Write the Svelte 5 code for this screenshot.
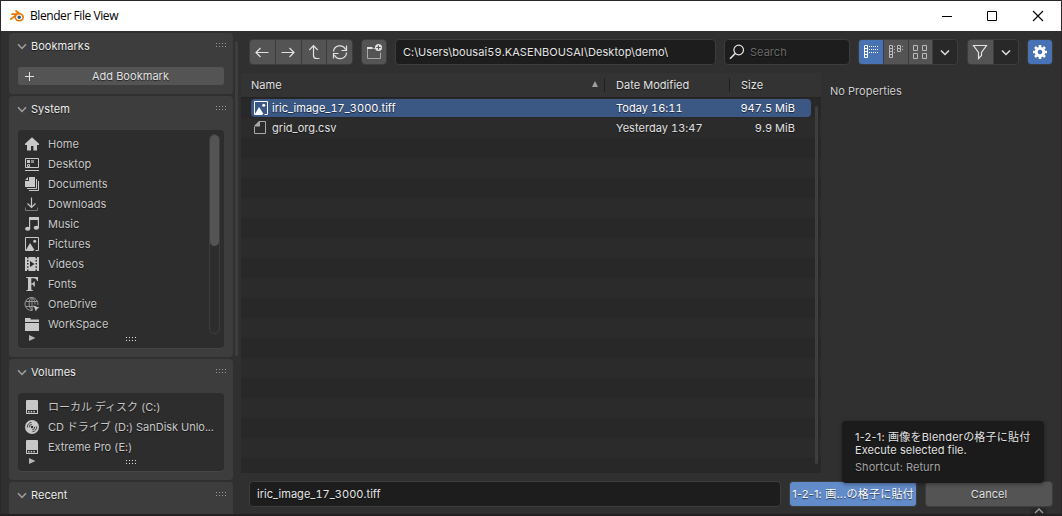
<script>
  const places = [
    { name: 'Home', icon: 'home' },
    { name: 'Desktop', icon: 'desktop' },
    { name: 'Documents', icon: 'documents' },
    { name: 'Downloads', icon: 'downloads' },
    { name: 'Music', icon: 'music' },
    { name: 'Pictures', icon: 'picture' },
    { name: 'Videos', icon: 'video' },
    { name: 'Fonts', icon: 'font' },
    { name: 'OneDrive', icon: 'globe' },
    { name: 'WorkSpace', icon: 'folder' }
  ];

  const volumes = [
    { name: 'ローカル ディスク (C:)', icon: 'drive' },
    { name: 'CD ドライブ (D:) SanDisk Unlo...', icon: 'disc' },
    { name: 'Extreme Pro (E:)', icon: 'drive' }
  ];

  const files = [
    { name: 'iric_image_17_3000.tiff', date: 'Today 16:11', size: '947.5 MiB', icon: 'picture' },
    { name: 'grid_org.csv', date: 'Yesterday 13:47', size: '9.9 MiB', icon: 'file' }
  ];

  let selected = $state(0);
  let filename = $state('iric_image_17_3000.tiff');
  let directory = $state('C:\\Users\\bousai59.KASENBOUSAI\\Desktop\\demo\\');
  let search = $state('');

  function pick(i) {
    selected = i;
    filename = files[i].name;
  }
</script>

{#snippet icon(name)}
  <svg class="icon" viewBox="0 0 16 16" width="16" height="16" fill="none" stroke="currentColor">
    {#if name === 'home'}
      <path d="M8 1.2L1 7.8V9h2v5.6h4V10h2.4v4.6H13V9h2V7.8z" fill="currentColor" stroke="none" />
    {:else if name === 'desktop'}
      <path d="M1.5 2.5h13v9h-13zM1 14.5h14M3.5 8.5h2v2h-2z" />
      <path d="M3 4h3v3H3z" fill="currentColor" stroke="none" />
      <path d="M7 4h3v3H7z" fill="#8b8b8b" stroke="none" />
    {:else if name === 'documents'}
      <path d="M5 1h6v10H1V5h4zM1 4l3-3v3z" fill="currentColor" stroke="none" />
      <path d="M12.5 3v9.5H3M14.5 5v9.5H5" />
    {:else if name === 'downloads'}
      <path d="M7.5 1.5v10M3.5 7.5l4 4 4-4" stroke-width="1.2" />
      <path d="M1.5 11.5v3h12v-3" stroke="#777" />
    {:else if name === 'music'}
      <path d="M5 1h10v11h-1.2V4H6.2v9H5z" fill="currentColor" stroke="none" />
      <ellipse cx="3.7" cy="12.7" rx="2.6" ry="2" fill="currentColor" stroke="none" />
      <ellipse cx="12.3" cy="11.8" rx="2.6" ry="2" fill="currentColor" stroke="none" />
    {:else if name === 'picture'}
      <path d="M9.5 14.5h-8v-13h13v13h-3" />
      <path d="M2 14l4-7 4.5 7z" fill="currentColor" stroke="none" />
      <circle cx="10.7" cy="5.2" r="1.5" fill="currentColor" stroke="none" />
    {:else if name === 'video'}
      <path
        d="M1 1h2v1.5h1.5V1h7v1.5H13V1h2v14h-2v-1.5h-1.5V15h-7v-1.5H3V15H1zM3 4v1.5h1.5V4zM3 7v1.5h1.5V7zM3 10.2v1.5h1.5v-1.5zM11.5 4v1.5H13V4zM11.5 7v1.5H13V7zM11.5 10.2v1.5H13v-1.5zM6 5v6l4.5-3z"
        fill="currentColor" fill-rule="evenodd" stroke="none"
      />
    {:else if name === 'font'}
      <path
        d="M2 1h12v4h-1C12.5 3 11.8 2.2 9.5 2.2H7.3V7.4C9 7.4 9.5 7 9.8 5.5h1v5h-1C9.5 9 9 8.5 7.3 8.5V13c0 1 .4 1.2 1.7 1.3V15H2.2v-.7c1.3-.1 1.8-.3 1.8-1.300V3c0-1-.5-1.200-2-1.300z"
        fill="currentColor" stroke="none"
      />
    {:else if name === 'globe'}
      <g stroke="#999">
        <path d="M13.9 9A6.5 6.5 0 1 0 8 14.5M1.8 5.5h12.4M1.8 10.5H10M8 1.5v13" />
        <path d="M9 14c-5-1-5-11-1-12.5C10.5 2.5 11 6 11 8.5" />
      </g>
      <path d="M9.5 9.5l6 2.2-2.5 1-1 2.8z" fill="currentColor" stroke="none" />
    {:else if name === 'folder'}
      <path d="M1 2h5.5v1.5H15V6H1zM1 7h14v8H1z" fill="currentColor" stroke="none" />
    {:else if name === 'drive'}
      <path
        d="M3 1h10q1 0 1 1v13H2V2q0-1 1-1zM3 11v3h10v-3zM4 12h1.5v1.5H4zM6.7 12h1.5v1.5H6.7zM9.4 12h1.5v1.5H9.4z"
        fill="currentColor" fill-rule="evenodd" stroke="none"
      />
    {:else if name === 'disc'}
      <circle cx="8" cy="8" r="7" fill="currentColor" stroke="none" />
      <circle cx="8" cy="8" r="1.2" fill="#2c2c2c" stroke="none" />
      <g stroke="#2c2c2c" stroke-width="0.9">
        <path d="M3.3 8.5A4.8 4.8 0 0 1 7.5 3.3M5.3 8.3A2.7 2.7 0 0 1 7.7 5.3" />
        <path d="M12.7 7.5a4.8 4.8 0 0 1-4.2 5.2M10.7 7.7a2.7 2.7 0 0 1-2.4 3" />
      </g>
    {:else if name === 'file'}
      <path d="M7 1.5h5.5v12h-11V7" stroke="#a8a8a8" />
      <path d="M1 6.5V6l5-5h1v5.5z" fill="#a8a8a8" stroke="none" />
    {:else if name === 'back'}
      <path d="M14.5 8.5H2M6.5 4L2 8.5 6.5 13" stroke-width="1.2" />
    {:else if name === 'forward'}
      <path d="M1.5 8.5H14M9.5 4L14 8.5 9.5 13" stroke-width="1.2" />
    {:else if name === 'up'}
      <path d="M13.5 14.5h-3q-3 0-3-3V1.5M3.3 6L7.5 1.7 11.7 6" stroke-width="1.2" />
    {:else if name === 'refresh'}
      <path d="M1.5 7.5A6.3 6.3 0 0 1 13.5 5.5M14.5 1.5v5h-5M14.5 8.5A6.3 6.3 0 0 1 2.5 11M1.5 14.5v-5h5" stroke-width="1.2" />
    {:else if name === 'newfolder'}
      <path d="M9 4.5H6.5M1.5 4v10.5h13v-6" stroke="#a8a8a8" />
      <path d="M1 3h5.5v2H1z" fill="currentColor" stroke="none" />
      <circle cx="12.5" cy="3.5" r="3.5" fill="currentColor" stroke="none" />
      <path d="M12.5 1.3v4.4M10.3 3.5h4.4" stroke="#545454" />
    {:else if name === 'search'}
      <circle cx="9.7" cy="6" r="4.8" stroke-width="1.2" />
      <path d="M6.2 9.5L1 14.7" stroke-width="1.6" />
    {:else if name === 'list'}
      <path d="M1.5 1.5h3v12h-3zM1.5 4.5h3M1.5 7.5h3M1.5 10.5h3" />
      <path d="M6 2.5h10M6 5.5h10M6 8.5h10" stroke-dasharray="1 1" />
    {:else if name === 'details'}
      <path d="M1.5 1.5h3v12h-3zM1.5 4.5h3M1.5 7.5h3M1.5 10.5h3M9.5 1.5h3v6h-3zM9.5 4.5h3" />
      <path d="M6 2.5h1M6 5.5h1M6 8.5h1M14 2.5h1M14 5.5h1" />
    {:else if name === 'grid'}
      <path d="M1.5 1.5h4v5h-4zM10.5 1.5h4v5h-4zM1.5 9.5h4v5h-4zM10.5 9.5h4v5h-4z" />
    {:else if name === 'filter'}
      <path d="M1.5 1.5h13L9.5 8.5v3L6.5 14.5v-6z" stroke-width="1.2" />
    {:else if name === 'gear'}
      <circle cx="8" cy="8" r="3.8" stroke-width="3" />
      <path d="M8 1v2M8 13v2M1 8h2M13 8h2M3 3l1.5 1.5M11.5 11.5L13 13M3 13l1.5-1.5M11.5 4.5L13 3" stroke-width="2.6" />
    {:else if name === 'down'}
      <path d="M4 6.5l4 4 4-4" stroke-width="1.5" />
    {:else if name === 'plus'}
      <path d="M8.5 4v9M4 8.5h9" />
    {/if}
  </svg>
{/snippet}

{#snippet grip()}
  <svg class="grip" width="11" height="4" viewBox="0 0 11 4">
    <path d="M0 .5h11M0 3.5h11" stroke="currentColor" stroke-dasharray="1 2" />
  </svg>
{/snippet}

{#snippet panelHead(title)}
  <header class="panel-head">
    <svg class="chevron" width="10" height="7" viewBox="0 0 10 7">
      <path d="M1 1.2l4 4.3 4-4.3" fill="none" stroke="#a0a0a0" stroke-width="1.5" />
    </svg>
    <h2>{title}</h2>
    {@render grip()}
  </header>
{/snippet}

{#snippet listFoot()}
  <div class="list-foot">
    <svg class="expand" width="7" height="6" viewBox="0 0 7 6"><path d="M0 0l6.5 3L0 6z" fill="#b5b5b5" /></svg>
    {@render grip()}
  </div>
{/snippet}

<div class="window">
  <div class="titlebar">
    <svg class="logo" width="16" height="14" viewBox="0 0 16 14">
      <path d="M1.8 10.2L8.5 5M3 5.2h6M7 2l5 3.8" stroke="#ea7600" stroke-width="1.7" stroke-linecap="round" fill="none" />
      <ellipse cx="10.2" cy="8.3" rx="4.7" ry="4.2" fill="#ea7600" />
      <ellipse cx="10.2" cy="8.2" rx="3" ry="2.7" fill="#fff" />
      <circle cx="10.2" cy="8.2" r="1.7" fill="#265787" />
    </svg>
    <span class="title">Blender File View</span>
    <svg class="controls" width="102" height="12" viewBox="0 0 102 12" fill="none" stroke="#000">
      <path d="M0 6.5h10M45.5 1.5h9v9h-9z" />
      <path d="M91 1l10 10M101 1L91 11" stroke-width="1.1" />
    </svg>
  </div>

  <div class="body">
    <aside>
      <div class="panels">
        <section class="panel bookmarks">
          {@render panelHead('Bookmarks')}
          <button class="add">{@render icon('plus')}<span>Add Bookmark</span></button>
        </section>
        <section class="panel system">
          {@render panelHead('System')}
          <div class="list">
            <div class="list-main">
              <ul>
                {#each places as place}
                  <li>{@render icon(place.icon)}<span>{place.name}</span></li>
                {/each}
              </ul>
              <div class="scroll"><div class="thumb"></div></div>
            </div>
            {@render listFoot()}
          </div>
        </section>
        <section class="panel volumes">
          {@render panelHead('Volumes')}
          <div class="list">
            <ul>
              {#each volumes as volume}
                <li>{@render icon(volume.icon)}<span>{volume.name}</span></li>
              {/each}
            </ul>
            {@render listFoot()}
          </div>
        </section>
        <section class="panel recent">
          {@render panelHead('Recent')}
        </section>
      </div>
      <div class="side-scroll"></div>
    </aside>

    <main>
      <div class="toolbar">
        <div class="group nav">
          <button>{@render icon('back')}</button>
          <button>{@render icon('forward')}</button>
          <button>{@render icon('up')}</button>
          <button>{@render icon('refresh')}</button>
        </div>
        <div class="group create"><button>{@render icon('newfolder')}</button></div>
        <input class="field path" bind:value={directory} />
        <label class="field search">
          {@render icon('search')}
          <input placeholder="Search" bind:value={search} />
        </label>
        <div class="group display">
          <button class="active">{@render icon('list')}</button>
          <button class="dim">{@render icon('details')}</button>
          <button class="dim">{@render icon('grid')}</button>
          <button class="drop">{@render icon('down')}</button>
        </div>
        <div class="group filters">
          <button>{@render icon('filter')}</button>
          <button class="drop">{@render icon('down')}</button>
        </div>
        <div class="group options"><button class="active">{@render icon('gear')}</button></div>
      </div>

      <div class="middle">
        <div class="files">
          <div class="columns">
            <div class="col-name">
              <span>Name</span>
              <svg class="sort" width="6" height="6" viewBox="0 0 6 6"><path d="M3 0l3 6H0z" fill="#a0a0a0" /></svg>
            </div>
            <div class="col-date">Date Modified</div>
            <div class="col-size">Size</div>
          </div>
          <div class="rows">
            <div class="row-list">
              {#each files as file, i}
                <!-- svelte-ignore a11y_click_events_have_key_events, a11y_no_static_element_interactions -->
                <div class="row" class:selected={selected === i} onclick={() => pick(i)}>
                  {@render icon(file.icon)}
                  <span class="name">{file.name}</span>
                  <span class="date">{file.date}</span>
                  <span class="size">{file.size}</span>
                </div>
              {/each}
            </div>
            <div class="file-scroll"></div>
          </div>
        </div>
        <div class="properties">No Properties</div>
      </div>

      <div class="bottom">
        <input class="field filename" bind:value={filename} />
        <button class="execute">1-2-1: 画...の格子に貼付</button>
        <button class="cancel">Cancel</button>
      </div>
    </main>
  </div>

  <div class="tooltip">
    <p>1-2-1: 画像をBlenderの格子に貼付</p>
    <p>Execute selected file.</p>
    <p class="shortcut">Shortcut: Return</p>
  </div>
  <div class="region-tab">
    <svg width="10" height="6" viewBox="0 0 10 6"><path d="M1 5l4-4 4 4" fill="none" stroke="#a0a0a0" stroke-width="1.3" /></svg>
  </div>
</div>

<style>
  :global(body) {
    margin: 0;
    background: #303030;
  }

  .window {
    position: relative;
    box-sizing: border-box;
    width: 1062px;
    height: 516px;
    border: 1px solid #2b2628;
    border-bottom: 2px solid #242122;
    background: #303030;
    color: #e2e2e2;
    font-family: Inter, 'Noto Sans CJK JP', sans-serif;
    font-size: 11px;
    font-variant-numeric: tabular-nums;
    letter-spacing: 0.04px;
    line-height: 14px;
    overflow: hidden;
    display: flex;
    flex-direction: column;
    text-shadow: 0 1px 1px rgba(0, 0, 0, 0.6);
  }

  button,
  input {
    box-sizing: border-box;
    margin: 0;
    padding: 0;
    border: 0;
    outline: 0;
    background: none;
    color: inherit;
    font: inherit;
    letter-spacing: inherit;
    text-shadow: inherit;
  }

  ul,
  p,
  h2 {
    margin: 0;
    padding: 0;
    font: inherit;
    list-style: none;
  }

  svg {
    display: block;
    flex: none;
  }

  .titlebar {
    flex: none;
    display: flex;
    align-items: center;
    height: 30px;
    padding: 0 17px 0 8px;
    box-sizing: border-box;
    background: #fff;
    color: #000;
    text-shadow: none;
  }

  .title {
    flex: 1;
    margin-left: 5px;
    font-family: 'Open Sans', sans-serif;
    font-size: 12px;
    letter-spacing: -0.43px;
  }

  .body {
    flex: 1;
    display: flex;
    min-height: 0;
  }

  aside {
    flex: none;
    display: flex;
    width: 239px;
    padding: 2px 0 0 8px;
    box-sizing: border-box;
  }

  .panels {
    width: 224px;
    display: flex;
    flex-direction: column;
    gap: 2px;
  }

  .side-scroll {
    width: 3px;
    height: 315px;
    margin: 8px 0 0 2px;
    border-radius: 2px;
    background: #3e3e3e;
  }

  .panel {
    flex: none;
    box-sizing: border-box;
    padding: 0 9px;
    border-radius: 4px;
    background: #3d3d3d;
  }

  .bookmarks {
    height: 61px;
  }

  .system {
    height: 261px;
  }

  .volumes {
    height: 121px;
  }

  .recent {
    height: 40px;
  }

  .panel-head {
    display: flex;
    align-items: center;
    height: 26px;
    margin-bottom: 8px;
  }

  .panel-head h2 {
    flex: 1;
    margin-left: 4px;
    color: #eee;
  }

  .chevron {
    margin: 1px 0 0 -1px;
  }

  .panel-head .grip {
    margin: -3px -3px 0 0;
    color: #999;
  }

  .add {
    display: flex;
    align-items: center;
    width: 206px;
    height: 18px;
    padding-left: 3px;
    border-radius: 3px;
    background: #545454;
  }

  .add span {
    flex: 1;
    text-align: center;
  }

  .list {
    box-sizing: border-box;
    padding: 4px 4px 0 6px;
    border-bottom: 1px solid #454545;
    border-radius: 4px;
    background: #2d2d2d;
    color: #c8c8c8;
  }

  .system .list {
    height: 219px;
  }

  .volumes .list {
    height: 79px;
    letter-spacing: -0.02px;
  }

  .list-main {
    display: flex;
    justify-content: space-between;
  }

  li {
    display: flex;
    align-items: center;
    gap: 8px;
    height: 20px;
    white-space: nowrap;
  }

  .scroll {
    box-sizing: border-box;
    width: 11px;
    height: 200px;
    border: 1px solid #3d3d3d;
    border-radius: 5px;
  }

  .thumb {
    width: 9px;
    height: 111px;
    border-radius: 5px;
    background: #545454;
  }

  .list-foot {
    display: flex;
    align-items: center;
    height: 9px;
    padding-left: 5px;
    color: #e0e0e0;
  }

  .expand {
    margin-bottom: 1px;
  }

  .list-foot .grip {
    margin-left: 90px;
  }

  .volumes .list ul {
    height: 60px;
  }

  main {
    flex: 1;
    display: flex;
    flex-direction: column;
  }

  .toolbar {
    flex: none;
    display: flex;
    align-items: center;
    height: 42px;
    box-sizing: border-box;
    padding: 0 8px 0 9px;
  }

  .group {
    display: flex;
    gap: 1px;
    box-sizing: border-box;
    height: 26px;
    border: 1px solid #3d3d3d;
    border-radius: 4px;
    background: #3d3d3d;
    overflow: hidden;
  }

  .group button {
    flex: 1;
    display: flex;
    align-items: center;
    justify-content: center;
    background: #545454;
  }

  .group .dim {
    color: #bbb;
  }

  .group .active {
    background: #4772b3;
    color: #fff;
  }

  .group .drop {
    background: #282828;
  }

  .nav {
    width: 104px;
  }

  .create {
    width: 26px;
    margin-left: 8px;
  }

  .field {
    box-sizing: border-box;
    height: 26px;
    border: 1px solid #3d3d3d;
    border-radius: 4px;
    background: #1d1d1d;
    color: #e6e6e6;
  }

  .path {
    width: 321px;
    margin-left: 8px;
    padding-left: 7px;
    letter-spacing: 0.08px;
  }

  .search {
    display: flex;
    align-items: center;
    gap: 5px;
    width: 126px;
    margin-left: 8px;
    padding-left: 4px;
  }

  .search input {
    width: 90px;
  }

  .search input::placeholder {
    color: #6a6a6a;
  }

  .display {
    width: 100px;
    margin: 0 1px 0 8px;
  }

  .filters {
    width: 52px;
    margin-left: 8px;
  }

  .options {
    width: 26px;
    margin-left: 8px;
  }

  .middle {
    flex: none;
    display: flex;
    height: 400px;
  }

  .files {
    display: flex;
    flex-direction: column;
    width: 580px;
    margin-left: 1px;
  }

  .columns {
    display: flex;
    align-items: center;
    height: 25px;
    box-sizing: border-box;
    padding-left: 10px;
    border-bottom: 1px solid #232323;
    background: #333;
  }

  .col-name {
    display: flex;
    align-items: center;
    justify-content: space-between;
    width: 347px;
    margin-right: 6px;
  }

  .sort {
    margin-bottom: 2px;
  }

  .col-date,
  .col-size {
    box-sizing: border-box;
    width: 125px;
    padding-left: 11px;
    border-left: 1px solid #1f1f1f;
  }

  .col-size {
    width: 80px;
  }

  .rows {
    flex: 1;
    display: flex;
    background: repeating-linear-gradient(#282828 0 20px, #2b2b2b 20px 40px);
  }

  .row-list {
    width: 560px;
    margin-left: 10px;
  }

  .row {
    display: flex;
    align-items: center;
    height: 18px;
    margin: 1px 0 2px;
    padding-left: 2px;
    border-radius: 4px;
  }

  .row.selected {
    background: #3b5784;
    color: #fff;
  }

  .row .name {
    width: 344px;
    margin-left: 3px;
  }

  .row .date {
    width: 100px;
  }

  .row .size {
    width: 79px;
    text-align: right;
  }

  .file-scroll {
    width: 3px;
    height: 358px;
    margin: 8px 0 0 4px;
    border-radius: 2px;
    background: #3e3e3e;
  }

  .properties {
    padding: 11px 9px;
    color: #cfcfcf;
  }

  .bottom {
    display: flex;
    height: 26px;
    margin: 8px 8px 0 9px;
  }

  .filename {
    width: 532px;
    padding-left: 7px;
  }

  .execute,
  .cancel {
    width: 128px;
    height: 26px;
    margin-left: 8px;
    border: 1px solid #3d3d3d;
    border-radius: 4px;
    background: #545454;
    white-space: nowrap;
  }

  .execute {
    background: #628bca;
    color: #fff;
    font-variant-numeric: normal;
    letter-spacing: 0.2px;
  }

  .tooltip {
    position: absolute;
    left: 841px;
    top: 420px;
    box-sizing: border-box;
    width: 202px;
    height: 62px;
    padding: 10px 13px;
    border-radius: 4px;
    background: #1b1b1b;
    box-shadow: 0 1px 4px rgba(0, 0, 0, 0.4);
    line-height: 13px;
    font-variant-numeric: normal;
    white-space: nowrap;
  }

  .tooltip p:first-child {
    letter-spacing: 0.2px;
  }

  .tooltip .shortcut {
    margin-top: 4px;
    color: #a5a5a5;
  }

  .region-tab {
    position: absolute;
    left: 1030px;
    bottom: 0;
    display: flex;
    justify-content: center;
    width: 16px;
    height: 6px;
    border-radius: 4px 4px 0 0;
    background: #282828;
  }
</style>
